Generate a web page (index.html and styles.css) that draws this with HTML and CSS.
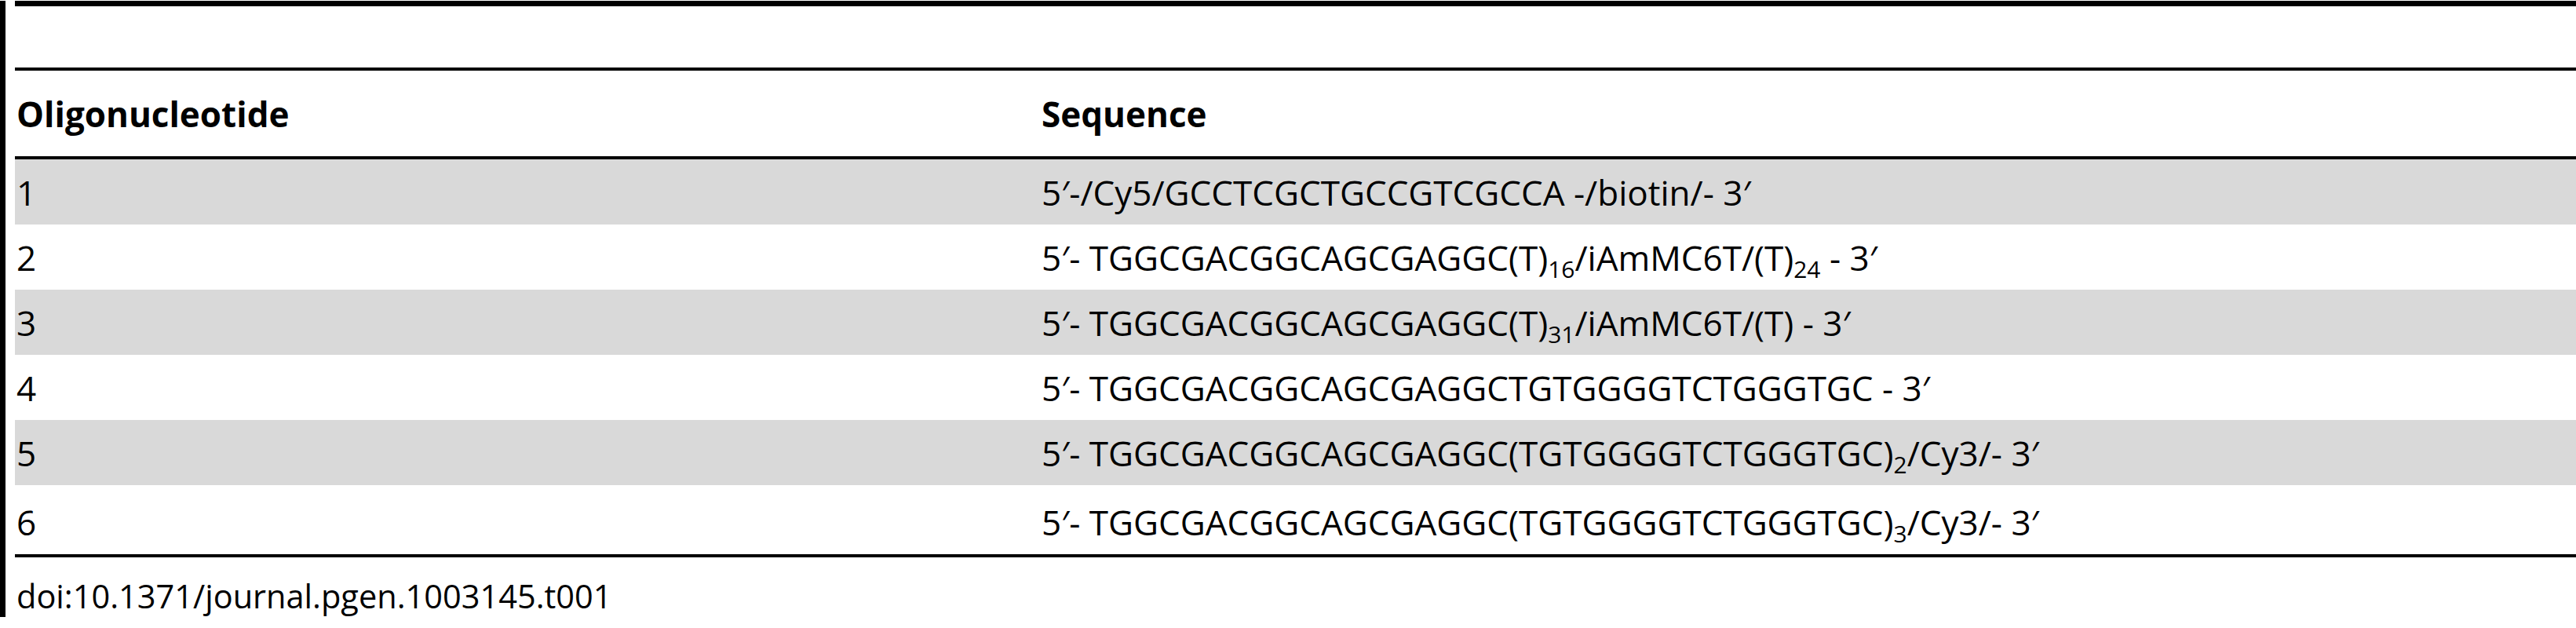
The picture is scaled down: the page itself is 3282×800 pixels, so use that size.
FILE: index.html
```html
<!DOCTYPE html>
<html>
<head>
<meta charset="utf-8">
<link rel="stylesheet" href="styles.css">
</head>
<body>
<div class="frame">
  <div class="blank"></div>
  <table class="oligo">
    <thead>
      <tr><th class="c1">Oligonucleotide</th><th class="c2">Sequence</th></tr>
    </thead>
    <tbody>
      <tr class="odd"><td>1</td><td>5′-/Cy5/GCCTCGCTGCCGTCGCCA -/biotin/- 3′</td></tr>
      <tr><td>2</td><td>5′- TGGCGACGGCAGCGAGGC(T)<sub>16</sub>/iAmMC6T/(T)<sub>24</sub> - 3′</td></tr>
      <tr class="odd"><td>3</td><td>5′- TGGCGACGGCAGCGAGGC(T)<sub>31</sub>/iAmMC6T/(T) - 3′</td></tr>
      <tr><td>4</td><td>5′- TGGCGACGGCAGCGAGGCTGTGGGGTCTGGGTGC - 3′</td></tr>
      <tr class="odd"><td>5</td><td>5′- TGGCGACGGCAGCGAGGC(TGTGGGGTCTGGGTGC)<sub>2</sub>/Cy3/- 3′</td></tr>
      <tr class="last"><td>6</td><td>5′- TGGCGACGGCAGCGAGGC(TGTGGGGTCTGGGTGC)<sub>3</sub>/Cy3/- 3′</td></tr>
    </tbody>
  </table>
  <div class="doi">doi:10.1371/journal.pgen.1003145.t001</div>
</div>
</body>
</html>
```
FILE: styles.css
```css
html, body {
  margin: 0;
  padding: 0;
  background: #fff;
}
body {
  font-family: "Open Sans", "Noto Sans", sans-serif;
  color: #000;
}
.frame {
  border-left: 7px solid #000;
  padding-left: 12px;
  height: 785px;
  box-sizing: border-box;
}
.blank {
  margin-top: 1px;
  border-top: 7px solid #000;
  border-bottom: 4px solid #000;
  height: 78px;
}
.oligo {
  width: 100%;
  border-collapse: collapse;
  font-size: 44px;
}
.oligo th {
  font-weight: 700;
  text-align: left;
  height: 109px;
  padding: 0 0 0 2px;
  border-bottom: 4px solid #000;
  vertical-align: middle;
}
.oligo th.c1 {
  width: 1304px;
}
.oligo td {
  height: 83px;
  padding: 0 0 0 2px;
  vertical-align: middle;
  white-space: nowrap;
}
.oligo tr.odd td {
  background: #d9d9d9;
}
.oligo tr.last td {
  height: 90px;
  vertical-align: top;
  padding-top: 17px;
  box-sizing: border-box;
}
.oligo tbody tr.last td {
  border-bottom: 4px solid #000;
}
.oligo sub {
  font-size: 0.68em;
  vertical-align: -0.3em;
  line-height: 0;
}
.doi {
  font-size: 41.5px;
  line-height: 50px;
  margin-top: 24px;
  padding-left: 2px;
}
```
